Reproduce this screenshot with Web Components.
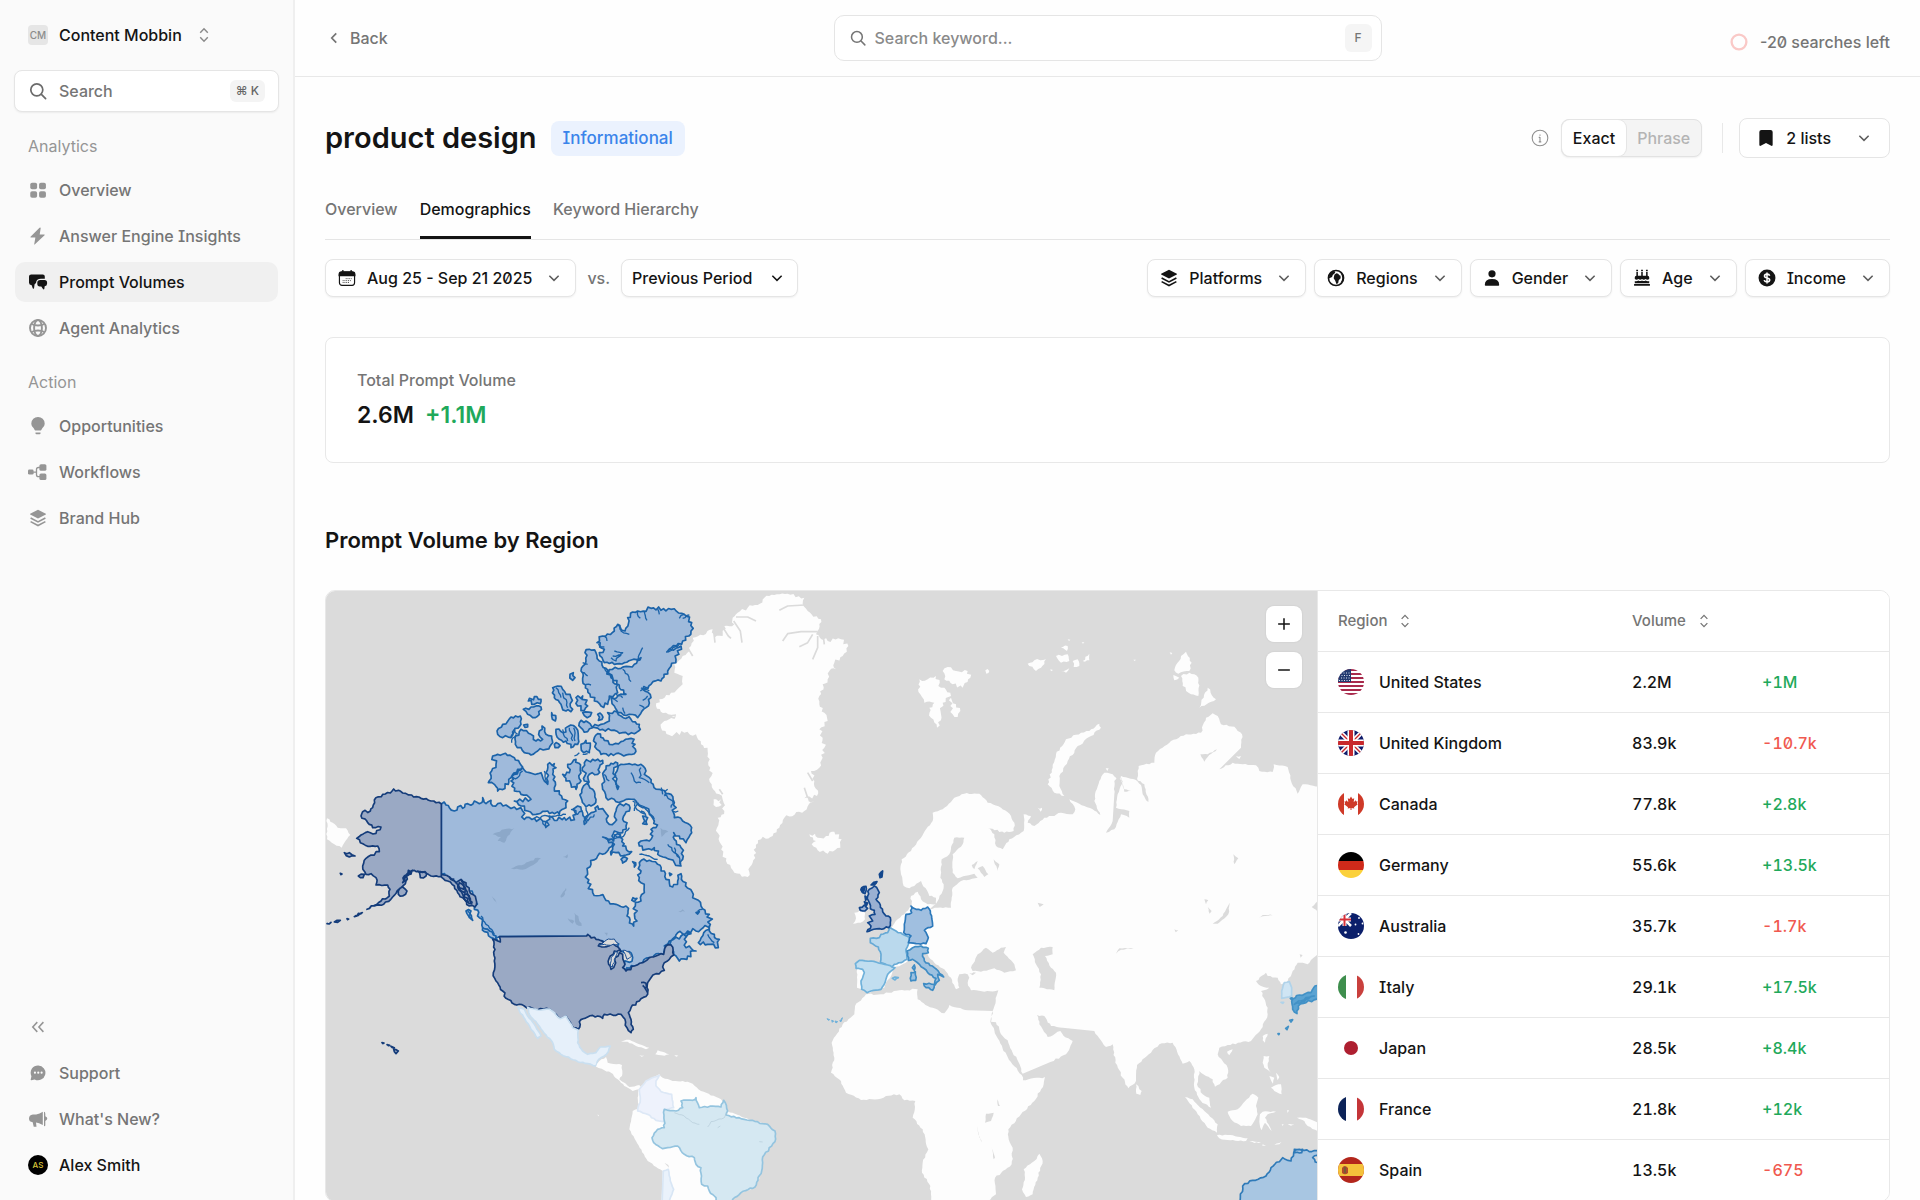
<!DOCTYPE html>
<html lang="en">
<head>
<meta charset="utf-8">
<meta name="viewport" content="width=device-width, initial-scale=1">
<title>Prompt Volumes</title>
<style>
  html, body { margin: 0; height: 100%; }
  body {
    --ink: #141414; --muted: #757575; --soft: #959595; --line: #e8e8e8;
    --up: #1fa95b; --down: #f0594f;
    font: 500 16px/24px Inter, "Liberation Sans", sans-serif;
    font-feature-settings: "cv08", "zero";
    color: var(--ink); background: #fefefe;
  }
</style>
</head>
<body>
<prompt-app></prompt-app>
<script>
const define = (name, html, setup) => {
  const tpl = document.createElement('template');
  tpl.innerHTML = html;
  customElements.define(name, class extends HTMLElement {
    constructor() { super(); this.attachShadow({ mode: 'open' }).append(tpl.content.cloneNode(true)); }
    connectedCallback() { if (setup && !this.ready) { this.ready = true; setup(this, this.shadowRoot); } }
  });
};

/* ---------- icons (20 x 20 grid) ---------- */
const ICONS = {
  grid: '<g fill="currentColor"><rect x="1.400" y="2" width="7.600" height="7.200" rx="2"/><rect x="11.200" y="2" width="7.600" height="7.200" rx="2"/><rect x="1.400" y="11.400" width="7.600" height="7.200" rx="2"/><rect x="11.200" y="11.400" width="7.600" height="7.200" rx="2"/></g>',
  bolt: '<path fill="currentColor" d="M11.700 .7 1.700 10.800q-.6.8.4 1h5l-1.300 7.300q.1.9.8.2l10.700-10.100q.6-.8-.4-1h-5l1.100-7.100q-.2-1.100-1.300-.4z"/>',
  chats: '<path fill="currentColor" d="M3.200 2.500h11.600q2 0 2 2v2.300H13q-4.600 0-5 4.200l-1.400 1.300-.6 4.200q-.9.4-1.300-.3l-1-3Q1 13 1 10.800V4.600q0-2.100 2.200-2.100z"/><path fill="currentColor" d="M12.300 8.100h4.200q2.600 0 2.600 2.600v.9q0 2.500-2.400 2.600l-.4 2.800q-.7.8-1.300 0l-1.700-2.600h-1.500q-2.500 0-2.500-2.600v-1q0-2.700 3-2.700z"/>',
  globe: '<g fill="none" stroke="currentColor" stroke-width="1.900"><circle cx="10" cy="10" r="8"/><ellipse cx="10" cy="10" rx="3.900" ry="8"/><path d="M3.500 6q6.500 3 13 0M3.500 14q6.500-3 13 0"/></g>',
  bulb: '<path fill="currentColor" d="M10 1a6.600 6.600 0 0 1 6.700 6.500c0 2.600-1.600 3.600-2.600 5-.7 1-.7 2-1.400 2H7.300c-.7 0-.7-1-1.400-2-1-1.400-2.600-2.400-2.600-5A6.600 6.600 0 0 1 10 1zM7.500 16.600h5v.9q0 .8-.9.8H8.400q-.9 0-.9-.8z"/>',
  flow: '<g fill="currentColor"><rect x="0" y="7.600" width="5.600" height="5" rx="1.400"/><rect x="11.400" y="2.200" width="7" height="6.600" rx="1.600"/><rect x="11.400" y="11.400" width="7" height="6.600" rx="1.600"/></g><path d="M5 10.100h3.500M12 5.500h-1.500q-2 0-2 2v5.200q0 2 2 2H12" fill="none" stroke="currentColor" stroke-width="1.300"/>',
  layers: '<path fill="currentColor" d="M10 .8 18.700 5.300Q19.200 5.700 18.700 6L10 10.600 1.300 6Q.8 5.700 1.300 5.300z"/><path d="m1.800 10 8.200 4.300 8.200-4.300M1.800 14l8.200 4.300 8.200-4.300" fill="none" stroke="currentColor" stroke-width="1.800"/>',
  collapse: '<path d="m9.200 4.600-5 5.400 5 5.400M16 4.600 11 10l5 5.400" fill="none" stroke="currentColor" stroke-width="1.700"/>',
  bubble: '<path fill="currentColor" d="M10.300 1.600a8.200 8.200 0 1 1-4 15.500L2.600 18q-1 .1-.7-.8l.8-3.700A8.200 8.200 0 0 1 10.300 1.600z"/><g fill="#fafafa"><circle cx="6.600" cy="9.600" r="1.200"/><circle cx="10.300" cy="9.600" r="1.200"/><circle cx="14" cy="9.600" r="1.200"/></g>',
  horn: '<path fill="currentColor" d="M14.800 2.800v13.200q-4-2.200-6.800-2.600l.5 4.400H5.700l-1-4.500Q1 13 1 9.600q0-3.600 3.900-4.100h3.300q3.500-.4 6.600-2.700zM16 2.800q1.300.2 1.300 2v2.500q2 .9 2 2.300t-2 2.300v4.600q0 .8-1.300.8z"/>',
  search: '<g fill="none" stroke="currentColor" stroke-width="1.700" stroke-linecap="round"><circle cx="8.800" cy="8.800" r="6"/><path d="m13.400 13.400 4.200 4.200"/></g>',
  sort: '<path d="M5.800 7.400 10 3l4.200 4.400M5.800 12.600 10 17l4.200-4.400" fill="none" stroke="currentColor" stroke-width="1.600"/>',
  left: '<path d="m12.500 4.800-5 5.200 5 5.200" fill="none" stroke="currentColor" stroke-width="1.900"/>',
  down: '<path d="m4.200 7.200 5.800 5.800 5.800-5.800" fill="none" stroke="currentColor" stroke-width="1.900"/>',
  calendar: '<rect x="1.600" y="3.700" width="16.800" height="14.400" rx="2.800" fill="none" stroke="currentColor" stroke-width="1.300"/><path d="M1.300 7.400V6q0-2.900 2.800-2.900h11.800q2.800 0 2.800 2.900v1.400zM5.400 1v3M14.600 1v3" fill="currentColor" stroke="currentColor" stroke-width="1.400"/><path d="M8.600 10.700h6.600M5.200 12.900H15M5.200 15h7" stroke="currentColor" stroke-width="1.100" stroke-dasharray="1 1" opacity=".8"/>',
  earth: '<circle cx="10" cy="10" r="8.400" fill="none" stroke="currentColor" stroke-width="1.800"/><path fill="currentColor" d="M3 4.800 8 1.600l1.200 2.600L6.400 6.600 5.600 9 2 10.500zM8.200 6.400l2.200-1.800 2 .6 1.400 1.800 1.200.4.200 3-2.200 2.200-.6 3.200-2 .8-1.200-3.600-1.800-2.600z"/><path d="M15 4.500q4 5.500 0 11l3-2 1-4-1.500-4z" fill="currentColor"/>',
  person: '<circle cx="10" cy="5.400" r="4" fill="currentColor"/><path fill="currentColor" d="M2 17.800q0-6.600 8-6.600t8 6.600q0 .8-.9.800H2.900q-.9 0-.9-.8z"/>',
  cake: '<path d="M4.600 3.400v4.600M10 3.400v4.600M15.400 3.400v4.600" stroke="currentColor" stroke-width="1.700"/><path d="M4.600 .8v1.700M10 .8v1.700M15.400 .8v1.700" stroke="currentColor" stroke-width="2"/><path fill="currentColor" d="M3.800 7.500h12.400q1.800 0 1.800 1.700v1.900q-2 1.500-4 0-2 1.500-4 0-2 1.500-4 0-2 1.500-4 0V9.200q0-1.700 1.800-1.700zM2 13.300q2 .7 4-.6 2 1.500 4 0 2 1.500 4 0 2 1.300 4 .6v2.400H2zM1.200 16.700h17.600v2H1.200z"/>',
  dollar: '<circle cx="10" cy="10" r="9.400" fill="currentColor"/><path d="M13 7.500q-.5-1.800-3-1.800-2.800 0-2.800 2 0 1.700 2.800 2.200 3 .5 3 2.400 0 2-3 2-2.700 0-3.200-1.900M10 3.800v12.400" fill="none" stroke="#fff" stroke-width="1.700"/>',
  bookmark: '<path fill="currentColor" d="M5 1h10q2.400 0 2.400 2.400v14.200q0 1.600-1.500 1L10 15.600l-5.900 3q-1.500.6-1.500-1V3.400Q2.600 1 5 1z"/>',
  info: '<circle cx="10" cy="10" r="8.700" fill="none" stroke="currentColor" stroke-width="1.200"/><path d="M10 9v5.500M10 6v1.400M8.600 9.300H10M8.600 14.300h2.800" stroke="currentColor" stroke-width="1.200"/>',
  plus: '<path d="M10 3.500v13M3.500 10h13" stroke="currentColor" stroke-width="1.700"/>',
  minus: '<path d="M3.500 10h13" stroke="currentColor" stroke-width="1.700"/>',
  ring: '<circle cx="10" cy="10" r="8.200" fill="none" stroke="#fac9c7" stroke-width="2.600"/>'
};
define('app-icon', `<style>:host{display:inline-flex;flex:none;width:20px;height:20px}:host([size="18"]){width:18px;height:18px}:host([size="16"]){width:16px;height:16px}svg{width:100%;height:100%;display:block}</style>`,
  (el, root) => root.append(Object.assign(document.createElement('template'), {
    innerHTML: `<svg viewBox="0 0 20 20" aria-hidden="true">${ICONS[el.getAttribute('name')]}</svg>` }).content));

/* ---------- flags (26 x 26 grid) ---------- */
const bars = (a, b, c) => `<path fill="${a}" d="M0 0h8v26H0z"/><path fill="${b}" d="M8 0h11v26H8z"/><path fill="${c}" d="M19 0h7v26h-7z"/>`;
const FLAGS = {
  us: '<path fill="#fff" d="M0 0h26v26H0z"/><path d="M0 1.100h26M0 5.100h26M0 9.100h26M0 13.100h26M0 17.100h26M0 21.100h26M0 25h26" stroke="#a82a4c" stroke-width="2"/><path fill="#233a70" d="M0 0h13v13H0z"/><path d="M3 4h10M1 6.500h12M3 9h10M1 11.500h12" stroke="#dfe5f0" stroke-width="1" stroke-dasharray="1 1.500"/>',
  gb: '<path fill="#101c6b" d="M0 0h26v26H0z"/><path d="m0 0 26 26M26 0 0 26" stroke="#fff" stroke-width="4.500"/><path d="m0 0 26 26M26 0 0 26" stroke="#c8282c" stroke-width="1.400"/><path d="M13 0v26M0 13h26" stroke="#fff" stroke-width="7"/><path d="M13 0v26M0 13h26" stroke="#c8282c" stroke-width="4"/>',
  ca: '<path fill="#fff" d="M0 0h26v26H0z"/><path fill="#cf3a28" d="M0 0h6v26H0zM20 0h6v26h-6zM13 5.500l1.500 2.500 1.700-.8-.5 4 2-2 .5 1.300 1.300-.3-.5 2.300.8.700-3.800 3 .3 1.300-2.800-.5V19h-1v-2l-2.800.5.3-1.300-3.800-3 .8-.7-.5-2.300 1.300.3.500-1.300 2 2-.5-4 1.700.8z"/>',
  de: '<path d="M0 0h26v9H0z"/><path fill="#cf2a1a" d="M0 9h26v9H0z"/><path fill="#fbd13b" d="M0 18h26v8H0z"/>',
  au: '<path fill="#0b1f6b" d="M0 0h26v26H0z"/><path d="m0 0 13 13M13 0 0 13" stroke="#fff" stroke-width="2.500"/><path d="M6.500 0v13M0 6.500h13" stroke="#fff" stroke-width="4"/><path d="M6.500 0v13M0 6.500h13" stroke="#d6303a" stroke-width="2"/><g fill="#fff"><circle cx="7.500" cy="19.500" r="1.300"/><circle cx="17.500" cy="11.500" r=".9"/><circle cx="21" cy="5" r=".9"/><circle cx="20.500" cy="21" r=".9"/><circle cx="24.500" cy="10.500" r=".9"/></g>',
  it: bars('#3e8e4d', '#fff', '#c9403d'),
  jp: '<path fill="#fff" d="M0 0h26v26H0z"/><circle cx="13" cy="13" r="7" fill="#ae1f30"/>',
  fr: bars('#0c2358', '#fff', '#c43538'),
  es: '<path fill="#b3261c" d="M0 0h26v26H0z"/><path fill="#f4c13b" d="M0 7h26v12H0z"/><path fill="#b04a2c" d="M4 11q2.500-4 6 0v5q-3 2.500-6 0z"/><path fill="#7a5b35" d="M6 10h2v6H6z"/>'
};
define('flag-icon', `<style>:host{display:inline-block;flex:none;width:26px;height:26px;border-radius:50%;overflow:hidden}svg{display:block}</style>`,
  (el, root) => root.append(Object.assign(document.createElement('template'), {
    innerHTML: `<svg width="26" height="26" viewBox="0 0 26 26" aria-hidden="true">${FLAGS[el.getAttribute('code')]}</svg>` }).content));

/* ---------- sidebar ---------- */
define('nav-item', `<style>
  :host{display:block}
  a{display:flex;align-items:center;gap:11px;height:40px;padding:0 13px;border-radius:10px;color:var(--muted);text-decoration:none}
  span{display:inline-flex;justify-content:center;width:20px;color:var(--soft)}
  :host([active]) a{background:#f0f0f0}
  :host([active]) a,:host([active]) span,:host([strong]) a{color:var(--ink)}
</style><a href="#"><span><slot name="icon"></slot></span><slot></slot></a>`,
  (el, root) => { if (el.hasAttribute('label')) root.querySelector('a').setAttribute('aria-label', el.getAttribute('label')); });

define('side-bar', `<style>
  :host{display:flex;flex-direction:column;box-sizing:border-box;padding:15px;background:#fafafa;border-right:2px solid #efefef}
  .team{display:flex;align-items:center;height:40px;gap:11px;padding:0 13px;border:0;background:none;font:inherit;color:inherit}
  .team app-icon{color:#8a8a8a;margin-left:2px}
  .logo{width:20px;height:20px;border-radius:4px;background:#e6e6e6;color:#8b8b8b;font-size:10px;line-height:20px;text-align:center}
  label{display:flex;align-items:center;gap:11px;height:40px;margin:15px 0 0;padding:0 13px;border:1px solid #e5e5e5;border-radius:8px;background:#fff;box-shadow:0 1px 2px #0000000f;color:#6b6b6b;margin-inline:-1px}
  input{flex:1;min-width:0;border:0;padding:0;outline:0;background:none;font:inherit;color:inherit}
  input::placeholder{color:#757575;opacity:1}
  kbd{padding:0 6px;border-radius:6px;background:#f4f4f4;font:500 12px/22px Inter,"DejaVu Sans",sans-serif;color:#666}
  h2{margin:0;padding:0 13px;font:400 16px/24px Inter,sans-serif;color:var(--soft)}
  nav{display:grid;gap:6px;margin-top:12px}
  .first,.second{margin-top:22px}
  .foot{margin-top:auto}
  .me{width:20px;height:20px;border-radius:50%;background:#000;color:#d9c53a;font-size:8px;line-height:20px;text-align:center}
</style>
<button class="team"><span class="logo">CM</span>Content Mobbin<app-icon name="sort" size="18"></app-icon></button>
<label><app-icon name="search"></app-icon><input type="text" placeholder="Search" aria-label="Search"><kbd>⌘ K</kbd></label>
<h2 class="first">Analytics</h2>
<nav>
  <nav-item><app-icon slot="icon" name="grid" size="18"></app-icon>Overview</nav-item>
  <nav-item><app-icon slot="icon" name="bolt" size="18"></app-icon>Answer Engine Insights</nav-item>
  <nav-item active><app-icon slot="icon" name="chats"></app-icon>Prompt Volumes</nav-item>
  <nav-item><app-icon slot="icon" name="globe"></app-icon>Agent Analytics</nav-item>
</nav>
<h2 class="second">Action</h2>
<nav>
  <nav-item><app-icon slot="icon" name="bulb"></app-icon>Opportunities</nav-item>
  <nav-item><app-icon slot="icon" name="flow"></app-icon>Workflows</nav-item>
  <nav-item><app-icon slot="icon" name="layers" size="18"></app-icon>Brand Hub</nav-item>
</nav>
<nav class="foot">
  <nav-item label="Collapse sidebar"><app-icon slot="icon" name="collapse" size="18"></app-icon></nav-item>
  <nav-item><app-icon slot="icon" name="bubble" size="18"></app-icon>Support</nav-item>
  <nav-item><app-icon slot="icon" name="horn"></app-icon>What's New?</nav-item>
  <nav-item strong><div slot="icon" class="me">AS</div>Alex Smith</nav-item>
</nav>`);

/* ---------- top bar ---------- */
define('top-bar', `<style>
  :host{display:grid;grid-template-columns:1fr 548px 1fr;align-items:center;height:76px;padding:0 30px;border-bottom:1px solid var(--line);color:var(--muted)}
  a{display:inline-flex;align-items:center;gap:7px;justify-self:start;color:inherit;text-decoration:none}
  label{display:flex;align-items:center;gap:8px;height:46px;box-sizing:border-box;padding:0 9px 0 14px;border:1px solid #e5e5e5;border-radius:10px;background:#fff}
  input{flex:1;min-width:0;border:0;padding:0;outline:0;background:none;font:inherit;color:inherit}
  input::placeholder{color:#8a8a8a;opacity:1}
  kbd{width:27px;border-radius:6px;background:#f5f5f5;font:500 12px/28px Inter,sans-serif;text-align:center}
  .left{display:flex;align-items:center;gap:12px;justify-self:end;padding-top:8px}
</style>
<a href="#"><app-icon name="left" size="18"></app-icon>Back</a>
<label><app-icon name="search" size="18"></app-icon><input type="text" placeholder="Search keyword..." aria-label="Search keyword"><kbd>F</kbd></label>
<div class="left"><app-icon name="ring" size="18"></app-icon>-20 searches left</div>`);

/* ---------- controls ---------- */
define('filter-button', `<style>
  :host{display:block}
  button{display:flex;align-items:center;gap:11px;height:38px;box-sizing:border-box;padding:0 13px 0 12px;border:1px solid #e5e5e5;border-radius:8px;background:#fff;box-shadow:0 1px 2px #0000000f;font:inherit;font-feature-settings:inherit;color:inherit;white-space:nowrap}
  .chev{color:#5c5c5c;margin-left:3px}
  :host([large]) button{height:40px;padding:0 17px;box-shadow:none}
  :host([large]) .chev{margin-left:14px}
</style><button aria-haspopup="true"><slot name="icon"></slot><slot></slot><app-icon class="chev" name="down" size="16"></app-icon></button>`);

define('period-select', `<style>
  :host{display:grid;align-items:center}
  select,app-icon{grid-area:1/1}
  select{appearance:none;height:38px;padding:0 44px 0 10px;border:1px solid #e5e5e5;border-radius:8px;background:#fff;box-shadow:0 1px 2px #0000000f;font:inherit;color:inherit}
  app-icon{justify-self:end;margin-right:13px;pointer-events:none}
</style><select aria-label="Comparison period"><option>Previous Period</option></select><app-icon name="down" size="16"></app-icon>`);

define('match-toggle', `<style>
  :host{display:flex;border:1px solid #e2e2e2;border-radius:8px;background:#f4f4f4;box-shadow:0 1px 2px #0000000f}
  button{height:36px;padding:0 11px;border:0;border-radius:8px;background:none;font:inherit;color:#b4b4b4}
  button[aria-pressed=true]{background:#fff;color:var(--ink);box-shadow:0 0 0 1px #e5e5e5}
</style><button aria-pressed="true">Exact</button><button aria-pressed="false">Phrase</button>`);

define('tab-list', `<style>
  :host{display:flex;gap:22px;border-bottom:1px solid #e5e5e5}
  ::slotted(a){padding:18px 0 15px;border-bottom:3px solid transparent;color:var(--muted);text-decoration:none}
  ::slotted(a[aria-current]){border-color:var(--ink);color:var(--ink)}
</style><slot></slot>`);

define('stat-card', `<style>
  :host{display:block;box-sizing:border-box;height:126px;padding:30px 31px;border:1px solid var(--line);border-radius:8px;background:#fff}
  p{margin:0;color:var(--muted)}
  div{display:flex;gap:11px;margin-top:9px;font:600 23px/28px Inter,sans-serif}
  .up{color:var(--up)}
</style><p><slot name="label"></slot></p><div><slot></slot><span class="up"><slot name="change"></slot></span></div>`);

/* ---------- map ---------- */
/* Each layer: style name, x shift, y shift, coast roughness, outlines */
const LAYERS = [
 ['land', 0, 0, 3, `18,712 35,725 50,740 75,742 88,762 75,778 62,800 40,790 18,775`],
 ['land', 960, 0, 8, `150,195 155,170 215,145 220,170 245,165 250,135 280,130 275,110 290,95 320,80 350,72 370,50 400,42 440,38 490,50 485,68 500,90 540,115 530,150 525,160 560,180 600,175 622,195 605,225 580,245 585,265 565,270 560,295 545,310 535,345 535,370 550,395 560,420 535,445 545,470 550,500 545,530 535,560 510,570 520,600 528,645 490,652 520,662 490,690 430,710 415,740 395,765 360,775 345,800 335,845 320,888 280,875 255,840 240,790 228,740 230,710 250,690 248,665 235,640 212,610 208,560 200,510 180,490 165,460 130,455 85,462 60,440 70,420 105,405 75,395 45,375 55,355 90,335 125,310 125,285 100,275 100,250 125,225
  |218,655 240,655 242,672 225,678|505,760 522,758 530,770 555,765 580,752 602,775 598,800 560,818 530,808 512,790 525,780
  |835,295 860,295 885,285 900,320 930,345 905,365 900,400 888,440 870,410 865,380 880,365 850,365 838,340|905,270 920,258 945,270 980,270 988,290 965,320 935,310 910,295|930,350 945,370 958,390 950,408 935,400 928,375|1033,268 1045,270 1036,278`],
 ['fjord', 960, 0, 0, `425,180 440,158 480,152 530,152|415,88 440,75 490,72|515,235 530,200 530,165|475,197 500,185 515,160|278,120 298,150 303,185|285,108 320,108 345,120|240,130 262,165 270,172|218,150 222,185|545,150 550,190|235,625 245,640|500,575 515,600|490,620 500,650|140,200 155,225|60,408 105,402`],
 ['land', 1500, 600, 3, `240,250 242,235 270,210 300,170 335,120 335,95 365,85 400,50 430,38 475,38 500,65 540,80 570,105 580,125 578,150 550,155 500,140 520,160 525,195 545,205 565,175 600,155 608,150 608,100 630,105 620,125 640,135 670,110 700,105 720,95 755,100 763,85 745,55 790,75 815,85 838,102 820,60 822,40 835,0 850,-25 875,-20 885,-10 890,0 900,-15 950,0 953,-45 1000,-55 1005,-85 1050,-120 1095,-140 1140,-145 1155,-190 1175,-203 1190,-195 1200,-170 1240,-163 1263,-140 1260,-100 1195,-35 1235,-55 1265,-50 1305,-47 1315,-30 1355,-27 1358,-50 1400,-42 1410,0 1430,38 1445,10 1500,18 1500,510 1460,550 1430,545 1415,570 1400,600 1380,610 1370,590 1340,585 1335,575 1305,600 1320,615 1345,620 1320,630 1340,680 1340,700 1320,745 1290,780 1220,792 1195,800 1190,820 1220,860 1220,890 1182,917 1175,895 1155,885 1135,870 1128,910 1145,940 1165,950 1170,980 1140,960 1120,920 1120,865 1105,840 1085,848 1055,785 1015,790 990,815 948,852 945,900 922,922 905,890 883,845 875,790 855,798 820,750 725,740 690,735 670,705 648,702 655,730 665,745 680,768 718,750 728,765 755,780 735,820 690,842 605,878 592,842 572,808 560,778 545,765 525,724 510,722 515,690 532,628 490,632 450,628 440,605 445,590 440,580 415,580 410,600 415,620 405,625 390,590 370,565 340,545 320,520 300,490 260,540 220,560 190,620 140,635 122,625 108,620 108,565 103,548 180,545 175,500 148,480 200,455 230,415 250,400 272,375 270,345 290,332 300,355 320,370 345,370 345,350 325,345 300,300 265,322 248,315 240,280
  |135,640 180,640 235,628 290,625 290,655 320,675 370,697 385,672 410,680 440,688 515,690 508,722 520,748 530,772 545,803 560,828 580,856 602,882 606,898 672,888 668,910 640,960 600,1000 562,1045 563,1075 575,1100 572,1150 522,1190 525,1240 490,1270 330,1270 328,1215 303,1175 305,1145 322,1105 305,1045 275,1010 283,960 250,958 235,940 195,945 170,955 120,957 75,935 60,900 30,875 40,830 32,785 65,730 100,700 102,675
  |608,1165 640,1140 655,1118 665,1140 650,1190 635,1240 615,1248 603,1225 612,1190|945,910 962,930 958,942 946,938|100,395 118,388 132,395 132,415 118,425 96,428 105,412`],
 ['land', 1860, 0, 4, `475,428 480,440 450,465 410,495 380,540 355,585 355,615 370,645 340,635 320,610 335,560 345,520 375,475 420,455 445,450|720,225 735,212 752,245 745,270 712,278 700,268|720,285 745,275 772,290 772,345 750,340 725,315|697,282 715,290 700,298|800,320 825,355 775,380|260,248 280,238 315,235 300,260 285,270|360,200 380,195 378,210|345,225 380,220 385,240 360,245|395,240 410,235 415,255 398,258|425,240 445,218 445,238|360,270 385,262 375,275|380,175 388,176 384,180|422,184 430,184 426,188|577,236 585,236 581,240|328,265 336,267 330,271|290,680 303,680 298,692|494,562 503,562 499,570|885,525 900,525 895,534|686,214 694,216 690,221`],
 ['land', 2220, 1080, 2, `372,468 395,475 430,510 470,550 468,575 440,560 410,520|468,582 500,582 560,592 555,600 500,597 475,592|500,512 530,505 575,458 592,470 585,495 590,520 570,555 540,555 515,540 505,525|597,520 605,512 645,512 620,520 612,530 632,570 612,545 602,568 596,550|608,345 625,345 620,375 630,395 610,380 605,365|625,405 640,410 636,428|645,395 655,408 650,418|630,440 645,432 660,430 662,460 640,450|605,285 620,278 612,305 605,298|498,332 515,325 505,343|708,530 735,530 770,545 770,570 740,555 730,540|640,612 662,602 655,610|565,600 600,604 580,606|680,550 700,550 690,554|662,550 668,550 665,555|678,508 684,508 680,516|605,610 615,614 604,614`],
 ['sea', 1500, 600, 2, `325,385 345,368 365,330 368,310 358,290 362,235 385,220 400,170 430,170 425,190 395,220 395,275 410,292 460,278 470,290 420,300 395,320 392,350 390,380 350,380|450,560 470,520 495,500 515,515 540,500 555,498 548,515 580,550 585,568 550,575 520,562 480,572 455,570|635,520 660,500 695,498 695,520 672,525 690,560 705,575 700,628 655,620 660,580 645,550|495,998 518,995 510,1020 492,1025|512,1095 522,1130 518,1135|468,1035 472,1060 482,1085 474,1062|530,955 537,975 531,975|445,577 465,575 455,583`],
 ['sea', 1860, 0, 2, `530,590 545,600 530,640 525,680 565,690 565,710 540,700 520,745 495,755 515,720 520,640 520,600|580,590 610,610 625,670 605,640 600,612|538,585 550,625 570,630 550,632|110,862 125,855 142,880 130,888|92,852 110,840 100,865|158,835 175,850 170,870|778,520 800,520 828,505 800,528 790,542|815,1028 845,1005 866,965 862,1000 830,1028|525,1118 535,1102 578,1102 540,1106|877,820 892,832 880,850|290,965 308,970 296,978|790,955 802,958 795,970|800,978 812,990 806,998|1112,978 1130,960 1130,992|700,1045 712,1048 704,1054|1076,1120 1085,1122 1079,1130|950,1012 965,1002 1010,1002 965,1006`],
 ['ca', 0, 0, 10, `361,669 375,672 385,680 400,690 410,678 425,682 440,668 460,660 475,668 485,650 495,668 510,658 515,675 530,668 555,672 580,678 605,690 610,715 640,712 665,720 675,738 685,705 700,718 730,710 750,718 765,700 755,685 770,675 785,695 790,730 805,700 825,690 830,675 850,690 862,705 865,730 880,725 885,690 890,675 915,668 925,690 905,715 915,735 905,755 880,750 875,790 865,800 845,820 830,825 810,850 800,880 800,905 815,935 850,950 885,970 915,975 918,1005 938,1035 948,1020 943,975 960,960 970,935 955,890 960,870 955,845 985,838 1010,850 1030,870 1035,895 1055,918 1070,900 1080,878 1095,905 1115,950 1140,975 1165,1000 1168,1030 1140,1045 1100,1050 1070,1055 1045,1080 1030,1095 1050,1080 1080,1065 1110,1058 1090,1075 1095,1100 1125,1110 1100,1125 1075,1140 1065,1125 1058,1120 1050,1092 1035,1095 1028,1120 985,1130 965,1145 940,1155 915,1170 905,1160 910,1150 935,1130 925,1112 900,1110 885,1085 850,1083 797,1065 535,1067 515,1060 485,1040 475,1010 460,985 462,960 440,920 405,905 385,888 361,880`],
 ['ca', 0, 0, 8, `845,768 862,775 878,780 890,758 905,775 905,795 932,812 915,822 885,815 870,822 880,790|1165,1035 1132,1085 1160,1090 1192,1100 1195,1075 1180,1060 1165,1050|485,1040 505,1050 525,1065 530,1078 510,1070 490,1052|435,990 450,990 455,1018 445,1010
  |850,570 870,547 890,546 878,570 882,600 890,625 888,570 900,550 925,548 960,550 975,570 970,580 985,590 990,605 1015,625 1050,640 1060,665 1060,710 1085,720 1112,740 1112,755 1095,785 1075,765 1058,755 1060,775 1080,800 1085,835 1080,855 1060,845 1035,830 1010,820 1000,800 975,805 955,795 960,780 985,780 995,765 990,745 1005,740 1000,720 985,700 975,680 950,670 940,655 915,655 885,662 855,650 845,625
  |570,600 580,580 605,560 625,575 660,575 670,600 680,610 675,575 680,550 700,548 705,560 695,580 700,620 715,640 740,660 735,680 715,700 680,690 645,700 620,690 600,675 580,660 630,655 600,640 580,630
  |515,525 545,520 580,530 605,558 570,590 562,610 530,630 520,610 502,605 512,570 525,550|725,580 745,575 740,550 765,535 778,560 780,600 765,625 750,610 735,600|790,545 815,535 845,538 835,560 830,580 805,580 800,610 790,600|785,620 800,605 815,625 825,655 810,675 790,670 780,650
  |583,465 600,445 630,460 645,480 665,475 655,450 663,435 675,460 692,465 695,485 675,505 650,510 630,522 610,515 600,500 583,490|530,460 545,430 570,408 598,405 600,430 580,450 570,470 545,470|705,445 725,455 740,437 765,440 772,465 770,490 750,500 735,480 715,475|780,490 795,478 808,495 805,515 788,515|775,425 795,420 815,440 800,452 785,445
  |820,470 830,458 850,478 865,490 900,482 930,472 942,490 940,518 900,520 870,518 840,520 828,505|815,438 840,430 865,420 860,395 880,390 900,405 930,415 955,430 958,445 940,458 905,455 870,448 845,445
  |805,205 825,215 835,240 855,262 870,290 890,310 890,335 865,345 860,370 840,375 820,360 800,325 785,300 780,270 795,240 792,215
  |828,185 845,165 880,150 890,130 912,150 920,110 950,90 990,82 1050,85 1090,100 1112,125 1110,150 1085,180 1040,210 1080,195 1065,235 1040,270 1020,300 990,310 965,325 990,350 975,380 950,410 925,400 900,395 880,375 870,350 915,340 895,320 875,290 865,266 900,262 940,250 960,230 910,245 880,250 850,245 835,215 850,205
  |695,320 710,315 725,325 750,350 755,385 735,390 720,370 700,350|765,350 785,345 800,375 790,388 770,375|785,395 812,395 808,405 790,404|830,400 843,402 843,415 832,418|692,395 705,412 703,420 692,405|747,280 757,275 762,290 755,298|622,360 640,347 660,355 658,368 640,370|607,385 630,378 660,378 655,400 635,410 620,400|700,490 712,488 712,500 702,500|608,432 620,430 620,438|965,705 980,710 978,730 965,728|900,835 912,828 915,840 905,846|935,842 944,845 940,858|1045,876 1052,880 1047,884|936,950 948,952 940,962|1125,995 1135,992 1130,999`],
 ['caline', 0, 0, 5, `965,200 955,220 948,240|880,210 905,215 875,225|905,265 920,280 930,302|970,90 978,118|950,92 958,112|1010,84 1015,100|1105,102 1085,112|1090,100 1075,112|890,130 900,150 925,160|850,165 858,180|832,190 850,198|1075,190 1035,213|905,380 912,398|725,335 740,380|705,320 720,350|640,712 680,705 735,700|570,470 580,445 590,460|585,460 572,485|725,445 740,480|745,440 755,480|758,440 762,480|930,575 940,600 960,605|960,560 955,590 985,605|1030,640 1055,660 1050,680|935,660 955,690 975,700|950,665 980,690 1000,715|960,690 975,705|940,690 950,668|1060,800 1080,850|1040,790 1075,830|750,685 770,700 785,690|795,680 800,720 820,700|860,780 890,770 900,760|880,760 900,770 925,740|955,820 985,825 1010,835|665,720 675,742|480,1005 495,1030 520,1060|440,990 450,1015|605,570 590,590 570,590|670,570 680,610|870,230 885,240 900,215|850,260 860,275|885,340 905,350|960,320 985,330|958,330 980,318|760,525 775,515|785,520 800,518|785,245 800,250|782,275 800,285|795,310 810,312|875,350 890,362|980,345 965,358|970,380 955,372|1040,625 1030,645|1055,690 1072,690|1020,620 1025,640|850,580 865,600|1130,990 1145,985|1160,1060 1180,1085`],
 ['calake', 0, 0, 3, `515,760 550,745 580,742 560,765 550,785 530,780 540,768|570,862 610,850 650,830 660,832 630,855 605,866|725,828 740,820 738,832|718,945 735,920 732,940 720,950|740,1012 760,1020 755,1028|760,995 772,1005 782,1035 765,1030|512,945 522,955 528,970|1018,740 1042,752 1022,768|1072,992 1085,985 1092,992|850,1055 860,1055 858,1065`],
 ['us', 0, 0, 5, `361,669 330,660 300,652 272,642 245,636 218,624 208,636 185,640 160,657 155,680 148,690 125,692 120,705 140,725 155,740 180,738 165,757 140,752 120,762 107,772 118,785 140,796 170,795 175,812 150,822 135,832 125,855 135,880 150,878 165,890 165,912 200,912 207,925 205,945 180,960 150,975 138,985 160,975 188,970 215,948 240,920 255,900 262,880 280,868 300,872 330,885 361,886
  |361,880 385,888 405,905 420,895 435,905 445,930 465,955 462,978 445,975 430,955 410,935 400,915 380,900 361,888|415,905 428,915 432,935 418,928|430,940 445,945 452,968 440,960|232,930 245,918 258,930 245,945 232,940|100,1007 112,997 124,995 112,1003|70,815 85,815 102,825 85,828|112,885 130,880 126,890|40,1023 58,1018 50,1024|18,1028 30,1024 24,1029|58,877 63,879 60,881|78,1013 83,1014 80,1016|245,905 250,885 262,868 275,868 258,885|290,870 312,872 315,885 298,890
  |535,1067 797,1065 800,1060 825,1075 848,1083 832,1095 850,1098 870,1087 890,1097 900,1112 880,1110 868,1125 863,1150 870,1165 878,1160 882,1130 895,1115 905,1120 908,1140 912,1150 905,1160 915,1170 940,1155 965,1145 985,1130 1005,1125 1028,1120 1035,1095 1050,1092 1058,1122 1045,1135 1030,1145 1025,1158 1030,1168 1005,1178 990,1190 980,1205 978,1220 980,1240 955,1260 930,1280 922,1295 930,1315 937,1345 930,1355 918,1340 912,1315 900,1300 885,1303 850,1300 845,1312 830,1305 800,1308 775,1322 772,1345 758,1342 745,1320 735,1305 718,1313 705,1300 685,1284 650,1287 610,1275 580,1270 555,1252 545,1230 525,1200 517,1175 520,1140 522,1105 515,1075 538,1083
  |218,1405 232,1410 225,1418|183,1385 189,1386 186,1388|198,1391 206,1393 202,1394|210,1396 220,1400 214,1400`],
 ['usline', 0, 0, 4, `960,1205 975,1207 972,1225|965,1213 980,1235|405,905 425,940 440,965|420,895 440,940 455,965|410,920 430,925|385,888 400,895`],
 ['lake', 0, 0, 3, `835,1092 850,1082 862,1074 880,1074 892,1088 870,1093 850,1090|868,1155 870,1130 882,1112 890,1114 880,1135 874,1158|905,1108 925,1114 932,1126 918,1135`],
 ['mx', 0, 600, 2, `590,678 610,685 620,705 640,730 660,765 650,772 630,745 612,715 595,690|620,680 650,687 685,684 705,702 718,713 735,705 755,740 772,748 770,785 785,810 800,820 825,815 838,798 868,795 862,812 850,825 833,835 825,855 800,848 770,842 720,820 700,805 695,785 665,750 645,722 625,700`],
 ['land', 0, 600, 2, `825,857 835,840 855,828 860,845 903,852 903,885 895,895 925,918 955,912 960,920 935,930 910,915 890,895 870,875 850,868|900,782 925,776 955,790 985,800 975,805 945,795 920,782|1003,820 1010,808 1045,820 1030,824|955,823 970,824 962,827|1060,823 1072,824 1066,827|830,1000 834,1004 831,1006`],
 ['land', 780, 900, 2, `175,620 200,600 235,580 245,590 275,600 320,602 335,608 360,630 420,655 440,690 490,710 555,730 580,750 580,785 545,830 540,880 520,920 480,935 455,955 450,1000 240,1000 245,870 200,840 165,780 145,745 155,690 175,680 170,650`],
 ['co', 780, 900, 2, `235,583 225,600 225,615 240,632 272,640 278,680 250,685 250,722 225,718 200,700 170,690 178,655 175,625 195,600`],
 ['cl', 780, 900, 1, `247,870 262,865 268,900 278,925 265,960 262,1000 242,1000`],
 ['br', 780, 900, 3, `250,685 285,690 305,680 300,660 335,658 345,650 355,680 395,675 420,678 428,658 440,690 435,702 490,715 560,730 582,750 582,782 545,828 542,870 522,918 480,935 455,955 452,1010 400,1010 405,950 385,930 380,915 362,910 360,860 345,850 340,830 310,820 290,795 245,803 218,785 213,770 230,745 250,740 250,720`],
 ['brline', 780, 900, 2, `280,695 310,705 335,725 355,730|380,738 390,722 430,710 440,695|410,740 418,735|535,782 545,783`],
 ['sea', 780, 900, 0, `250,845 262,852 264,860|95,1 96,1 95,2`],
 ['fr', 1500, 600, 2, `205,438 225,450 245,460 268,468 262,490 255,505 258,535 240,545 220,550 210,558 178,545 180,520 172,498 148,485 148,472 175,470 180,460 200,455`],
 ['es', 1500, 600, 2, `103,548 115,538 150,540 200,552 222,560 200,580 192,605 180,625 150,630 138,635 122,625 120,600 130,575 125,565 105,562|214,592 222,588 232,590 222,597`],
 ['canary', 1500, 600, 1, `18,713 26,716 22,718|32,718 38,720 34,724|42,720 50,722 45,726|56,720 64,710 60,722`],
 ['it', 1500, 600, 3, `258,510 275,500 300,495 322,502 322,515 305,518 310,540 340,560 368,588 350,580 355,598 342,612 345,592 320,575 295,550 275,535 262,538|308,608 340,610 335,628 310,615|270,575 283,572 284,598 270,600|274,560 280,552 280,568`],
 ['de', 1500, 600, 3, `270,375 285,385 300,388 320,378 328,390 335,435 310,448 322,470 315,488 285,488 262,485 270,465 248,455 250,430 255,400 272,395`],
 ['gb', 1500, 600, 4, `145,325 160,315 170,325 175,335 165,355 178,372 185,392 195,405 208,410 208,425 203,440 175,443 150,448 138,452 150,435 140,425 155,420 145,405 162,400 160,388 148,383 145,365 140,345|115,380 130,372 140,382 132,390 118,388|122,320 135,316 132,338 124,334`],
 ['gbisle', 1500, 600, 2, `175,280 185,270 183,288 177,290|150,312 158,304 168,302 160,312|120,325 130,320 126,335|132,345 138,350 134,358|130,362 140,366 136,375`],
 ['kr', 2220, 1080, 1, `662,150 670,125 685,122 692,140 692,165 662,172|660,184 668,184 665,187`],
 ['jp', 2220, 1080, 5, `692,180 715,162 750,155 762,135 775,135 775,170 735,185 712,195 708,218 695,205|700,190 712,180 735,170 760,165 735,175|686,238 695,236 690,243|674,262 682,256 678,266|651,278 655,278 653,281|688,172 693,170 691,175`],
 ['au', 2220, 1080, 4, `700,628 730,628 775,632 775,640 755,650 775,672 775,800 535,800 545,735 575,718 615,705 630,680 665,650 690,660|700,625 725,625 722,635 702,635`]
];
const roughen = (() => {
  let seed = 7;
  const rnd = () => (seed = (seed * 16807) % 2147483647) / 2147483647 - .5;
  return (text, amp, closed) => {
    const pts = text.trim().split(/\s+/).map(p => p.split(',').map(Number));
    const out = [];
    pts.forEach((p, i) => {
      out.push(p);
      const q = pts[i + 1] || (closed && pts[0]);
      if (!q) return;
      const dx = q[0] - p[0], dy = q[1] - p[1], len = Math.hypot(dx, dy);
      if (!amp || len < 12 || len > 75) return;
      const n = Math.round(len / 8);
      for (let k = 1; k < n; k++) {
        const t = k / n, j = rnd() * amp * 1.6;
        out.push([p[0] + dx * t - dy / len * j, p[1] + dy * t + dx / len * j]);
      }
    });
    return 'M' + out.map(p => p.map(v => v.toFixed(1)).join(' ')).join('L') + (closed ? 'Z' : '');
  };
})();
define('region-map', `<style>
  :host{display:block;position:relative;background:#dbdbdb;overflow:hidden}
  svg{position:absolute;inset:0;width:100%;height:100%}
  path{stroke-width:5;stroke-linejoin:round}
  .land{fill:#fdfdfd}
  .sea{fill:#dbdbdb}
  .fjord{fill:none;stroke:#dbdbdb}
  .ca{fill:#9fbadb;stroke:#1b63a9}
  .caline{fill:none;stroke:#1b63a9;stroke-width:4}
  .calake{fill:#8ca8c9}
  .us{fill:#9aa9c4;stroke:#143c7a}
  .usline{fill:none;stroke:#143c7a}
  .lake{fill:#dbdbdb;stroke:#1b4f93;stroke-width:3}
  .mx{fill:#e6f0fa;stroke:#c9dff0}
  .co{fill:#eef2fc;stroke:#dde8f6}
  .cl{fill:#eaf2fb;stroke:#d8e6f5}
  .br{fill:#d5e8f2;stroke:#94c4df}
  .brline{fill:none;stroke:#b4cad8;stroke-width:2}
  .fr{fill:#bad9ed;stroke:#66a9d5}
  .es{fill:#c1def0;stroke:#6fb1da}
  .canary{fill:#6fb1da;stroke:#6fb1da;stroke-width:3}
  .it{fill:#9dc1e0;stroke:#3f8cc4}
  .de{fill:#a0bfe0;stroke:#2c79bb}
  .gb{fill:#9ab0d2;stroke:#13478d}
  .gbisle{fill:#13478d;stroke:#13478d}
  .kr{fill:#cfe5f4;stroke:#b0d3ea}
  .jp{fill:#5ba3d2;stroke:#4291c6}
  .au{fill:#a8c6e2;stroke:#2f7ab8}
  .zoom{position:absolute;top:15px;right:15px;display:grid;gap:10px}
  button{display:grid;place-items:center;width:36px;height:36px;padding:0;border:0;border-radius:8px;background:#fff;color:var(--ink);box-shadow:0 0 2px #0000001a}
</style>
<svg viewBox="15 30 2973 1830" preserveAspectRatio="xMinYMin slice" role="img" aria-label="World map of prompt volume"></svg>
<div class="zoom"><button aria-label="Zoom in"><app-icon name="plus" size="18"></app-icon></button><button aria-label="Zoom out"><app-icon name="minus" size="18"></app-icon></button></div>`,
  (el, root) => {
    root.querySelector('svg').innerHTML = LAYERS.map(([kind, dx, dy, amp, text]) => {
      const closed = !/line|fjord/.test(kind);
      return `<path class="${kind}" transform="translate(${dx} ${dy})" d="${text.split('|').map(t => roughen(t, amp, closed)).join('')}"/>`;
    }).join('');
  });

/* ---------- table ---------- */
const ROWS = [['us', 'United States', '2.2M', '+1M'], ['gb', 'United Kingdom', '83.9k', '-10.7k'], ['ca', 'Canada', '77.8k', '+2.8k'],
  ['de', 'Germany', '55.6k', '+13.5k'], ['au', 'Australia', '35.7k', '-1.7k'], ['it', 'Italy', '29.1k', '+17.5k'],
  ['jp', 'Japan', '28.5k', '+8.4k'], ['fr', 'France', '21.8k', '+12k'], ['es', 'Spain', '13.5k', '-675']];
define('region-table', `<style>
  :host{display:block;background:#fff;border-left:1px solid var(--line)}
  table{width:100%;border-collapse:collapse;table-layout:fixed}
  th,td{height:60px;padding:0;border-bottom:1px solid var(--line);text-align:left;font-weight:500}
  th:first-child,td:first-child{width:55%;padding-left:20px;box-sizing:border-box}
  th:nth-child(2){width:130px}
  th button{display:flex;align-items:center;gap:10px;padding:0;border:0;background:none;font:500 15px/24px Inter,sans-serif;color:var(--muted)}
  .name{display:flex;align-items:center;gap:15px}
  td{font-feature-settings:"cv08","zero","tnum"}
  .up{color:var(--up)}.down{color:var(--down)}
</style><table><thead><tr><th><button>Region<app-icon name="sort" size="16"></app-icon></button></th><th><button>Volume<app-icon name="sort" size="16"></app-icon></button></th><th></th></tr></thead><tbody>
${ROWS.map(([c, n, v, d]) => `<tr><td><div class="name"><flag-icon code="${c}"></flag-icon>${n}</div></td><td>${v}</td><td class="${d[0] === '+' ? 'up' : 'down'}">${d}</td></tr>`).join('')}</tbody></table>`);

/* ---------- page ---------- */
define('prompt-app', `<style>
  :host{display:grid;grid-template-columns:295px minmax(0,1fr);height:100vh;overflow:hidden}
  main{display:flex;flex-direction:column;min-height:0}
  .page{flex:1;min-height:0;overflow:auto;scrollbar-width:none;padding:41px 30px 0}
  .row{display:flex;align-items:center;gap:8px}
  .push{margin-left:auto}
  h1{margin:0 6px 0 0;font:600 29px/40px Inter,sans-serif}
  .badge{padding:5px 12px;border-radius:8px;background:#ebf2fe;color:#3a84ea;font-size:17px;line-height:25px}
  .info{color:#8f8f8f;margin-right:4px}
  .rule{width:1px;height:30px;margin:0 8px 0 12px;background:var(--line)}
  tab-list{margin-top:21px}
  .filters{margin-top:19px}
  .vs{color:var(--muted);margin:0 3px}
  stat-card{margin-top:40px}
  h2{margin:61px 0 0;font:600 22px/32px Inter,sans-serif}
  .regions{display:grid;grid-template-columns:991fr 572fr;margin-top:34px;border:1px solid var(--line);border-radius:10px;overflow:hidden}
</style>
<side-bar></side-bar>
<main>
  <top-bar></top-bar>
  <div class="page">
    <div class="row"><h1>product design</h1><span class="badge">Informational</span>
      <app-icon class="push info" name="info" size="18"></app-icon><match-toggle></match-toggle><span class="rule"></span>
      <filter-button large><app-icon slot="icon" name="bookmark" size="18"></app-icon>2 lists</filter-button></div>
    <tab-list><a href="#">Overview</a><a href="#" aria-current="page">Demographics</a><a href="#">Keyword Hierarchy</a></tab-list>
    <div class="row filters">
      <filter-button><app-icon slot="icon" name="calendar" size="18"></app-icon>Aug 25 - Sep 21 2025</filter-button><span class="vs">vs.</span><period-select></period-select>
      <filter-button class="push"><app-icon slot="icon" name="layers" size="18"></app-icon>Platforms</filter-button>
      <filter-button><app-icon slot="icon" name="earth" size="18"></app-icon>Regions</filter-button>
      <filter-button><app-icon slot="icon" name="person" size="18"></app-icon>Gender</filter-button>
      <filter-button><app-icon slot="icon" name="cake" size="18"></app-icon>Age</filter-button>
      <filter-button><app-icon slot="icon" name="dollar" size="18"></app-icon>Income</filter-button>
    </div>
    <stat-card><span slot="label">Total Prompt Volume</span>2.6M<span slot="change">+1.1M</span></stat-card>
    <h2>Prompt Volume by Region</h2>
    <section class="regions"><region-map></region-map><region-table></region-table></section>
  </div>
</main>`);
</script>
</body>
</html>
